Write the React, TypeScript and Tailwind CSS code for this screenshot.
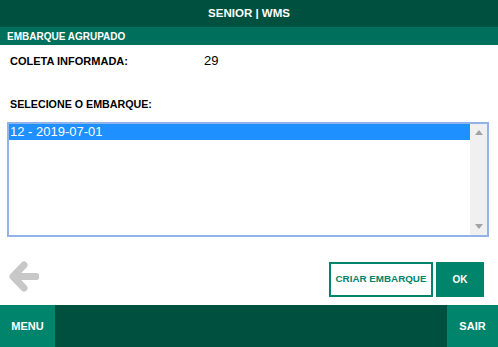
import React from "react";

export default function App() {
  return (
    <div
      className="w-[498px] h-[347px] flex flex-col bg-white overflow-hidden"
      style={{ fontFamily: '"Liberation Sans", Arial, sans-serif' }}
    >
      <div className="h-[27px] bg-[#00503f] flex items-center justify-center text-white font-bold text-[11.5px]">
        SENIOR | WMS
      </div>
      <div className="h-[18px] bg-[#006f5b] flex items-center pl-[7px] text-white font-bold text-[10px]">
        EMBARQUE AGRUPADO
      </div>
      <div className="flex-1 flex flex-col px-[7px]">
        <div className="flex items-center h-[14px] mt-[9px] pl-[3px] text-[11px] font-bold text-black">
          <span className="w-[194px]">COLETA INFORMADA:</span>
          <span className="font-normal text-[13px]">29</span>
        </div>
        <div className="h-[14px] mt-[29px] pl-[3px] flex items-center text-[10.7px] font-bold text-black">
          SELECIONE O EMBARQUE:
        </div>
        <div className="mt-[11px] w-[482px] h-[115px] border-2 border-[#92b3ea] flex">
          <div className="flex-1">
            <div className="h-[16px] bg-[#1e90ff] text-white text-[13px] leading-[16px] pl-[1px]">
              12 - 2019-07-01
            </div>
          </div>
          <div className="w-[17px] bg-[#f0f0f0] flex flex-col items-center justify-between py-[6px]">
            <svg width="8" height="5" viewBox="0 0 8 5">
              <polygon points="4,0 8,5 0,5" fill="#a3a3a3" />
            </svg>
            <svg width="8" height="5" viewBox="0 0 8 5">
              <polygon points="0,0 8,0 4,5" fill="#a3a3a3" />
            </svg>
          </div>
        </div>
        <div className="mt-[25px] flex items-start">
          <svg width="30" height="31" viewBox="0 0 30 31" className="ml-[2px] mt-[-1px]">
            <path
              d="M15 4 L4 15.5 L15 27 M5 15.5 L27 15.5"
              stroke="#c8c8c8"
              strokeWidth="7"
              strokeLinecap="round"
              strokeLinejoin="round"
              fill="none"
            />
          </svg>
          <div className="ml-auto flex gap-[3px] mr-[7px]">
            <button className="w-[104px] h-[35px] border-2 border-[#00846c] text-[#00846c] font-bold text-[9.8px] bg-white">
              CRIAR EMBARQUE
            </button>
            <button className="w-[48px] h-[35px] bg-[#00846c] text-white font-bold text-[10px]">
              OK
            </button>
          </div>
        </div>
      </div>
      <div className="h-[42px] bg-[#00503f] flex">
        <div className="w-[55px] bg-[#00846c] flex items-center justify-center text-white font-bold text-[11px]">
          MENU
        </div>
        <div className="flex-1" />
        <div className="w-[51px] bg-[#00846c] flex items-center justify-center text-white font-bold text-[11px]">
          SAIR
        </div>
      </div>
    </div>
  );
}
